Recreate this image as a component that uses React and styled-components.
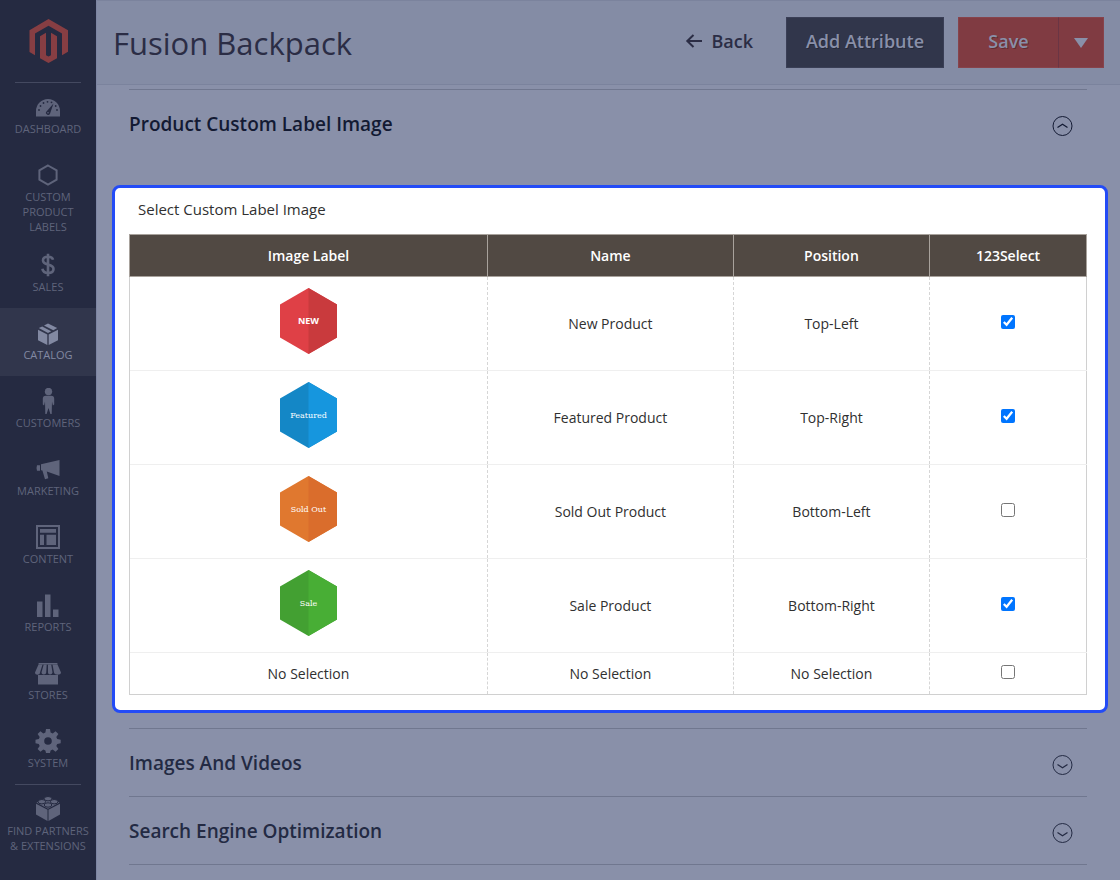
import React, { useState } from "react"
import styled, { createGlobalStyle } from "styled-components"

const GlobalStyle = createGlobalStyle`
  *, *::before, *::after {
    box-sizing: border-box;
  }
  body {
    margin: 0;
    background: #8990a9;
    color: #303030;
    font-family: "Open Sans", "Noto Sans", sans-serif;
    font-size: 14px;
  }
  button {
    font-family: inherit;
    cursor: pointer;
  }
`

const icons = {
  dashboard: (
    <>
      <path
        fillRule="evenodd"
        d="M1 22.500V17a12 12 0 0 1 24 0v5.500zM12 20.500a2 2 0 0 0 3-.8L18.500 9.500 11.500 17.500a2 2 0 0 0 .5 3z"
      />
      <g fill="#252a41">
        <circle cx="4" cy="16" r="0.9" />
        <circle cx="5.500" cy="12" r="0.9" />
        <circle cx="8.500" cy="9" r="0.9" />
        <circle cx="12.500" cy="7.800" r="0.9" />
        <circle cx="16.500" cy="8.300" r="0.9" />
        <circle cx="20.700" cy="12" r="0.9" />
        <circle cx="22" cy="16" r="0.9" />
      </g>
      <circle cx="13" cy="18.700" r="0.8" />
    </>
  ),
  labels: (
    <path
      d="M13 3.500 21.600 8.300V17.700L13 22.500 4.400 17.700V8.300z"
      fill="none"
      stroke="currentColor"
      strokeWidth="2"
    />
  ),
  sales: (
    <path
      d="M18 7.800C17.500 5.500 15.600 4.700 13 4.700c-2.800 0-5 1.300-5 3.700 0 5.400 10.500 2.800 10.500 8.500 0 2.700-2.300 4-5.400 4-3.100 0-5.300-1.400-5.700-4.200M13 1.800v22.400"
      fill="none"
      stroke="currentColor"
      strokeWidth="2.600"
    />
  ),
  catalog: (
    <>
      <path d="M3 9.700 12.300 14.400V25L3 20.300zM23 9.700 13.700 14.400V25L23 20.300z" />
      <path d="M3.800 8.100 7.200 6.400 16.200 11.200 13 12.900zM9 5.500 13 3.500 22.200 8.100 18.300 10.200z" />
    </>
  ),
  customers: (
    <>
      <circle cx="13.500" cy="3.500" r="3.700" />
      <path d="M10.800 7.800h5.400c2 0 3 1.200 3 3v5.800l-1.300.8-.9-4-.3 12.600h-1.300L13.500 20l-1.900 6h-1.300L10 13.400l-.9 4-1.300-.8v-5.800c0-1.800 1-3 3-3z" />
    </>
  ),
  marketing: (
    <path d="M2 9.200h3v5.500H2L1.500 12zM6 8.300 24.500 4v16L11.800 15.600l1.500 6.700-3.300.9-2.600-8.800L6 14.200z" />
  ),
  content: (
    <path
      fillRule="evenodd"
      d="M1 1h24v24H1zM3 3v20h20V3zM5 5h16v3.800H5zM5 10.700h4V21H5zM11.500 10.700H21V21h-9.500z"
    />
  ),
  reports: <path d="M2 9.500h5.500V25H2zM10 2.500h5.500V25H10zM18 17.500h5.500V25H18z" />,
  stores: (
    <>
      <path d="M3 15h20v9.500H3zM3.600 3h18.800v1.500H3.600z" />
      <path d="M3.500 4.500 0 12.500c0 3 5 3 5 0L7.500 4.500zM8.700 4.500 6.500 12.500c0 2.600 4.700 2.600 4.700 0L11.700 4.500zM13 4.500v8c0 2.600 4 2.600 4.500 0L16.200 4.500zM17.500 4.500 19 12.500c.5 3 7 3 7 0L22.500 4.500z" />
    </>
  ),
  system: (
    <path
      fillRule="evenodd"
      d="M11 1h4l.6 3.500 2.100.9 2.900-2.100 2.800 2.800-2.100 2.900.9 2.100 3.500.6v3.600l-3.500.6-.9 2.100 2.100 2.900-2.800 2.800-2.900-2.100-2.100.9L15 25h-4l-.6-2.500-2.100-.9-2.900 2.100-2.800-2.800 2.100-2.900-.9-2.100-3.300-.6v-3.600l3.300-.6.9-2.100-2.100-2.900 2.800-2.800 2.900 2.100 2.100-.9zM13 9.200a3.800 3.800 0 1 0 0 7.600 3.800 3.800 0 0 0 0-7.600z"
    />
  ),
  partners: (
    <>
      <path d="M1 7.700 12.500 13.800V25L1 18.500zM25 7.700 13.500 13.800V25L25 18.500z" />
      <path d="M1.500 6.500 13 1 24.500 6.500 13 12.700z" />
      <g stroke="#252a41" strokeWidth="1">
        <ellipse cx="13" cy="2.700" rx="3.800" ry="2.200" />
        <ellipse cx="6.800" cy="5.700" rx="3.800" ry="2.200" />
        <ellipse cx="19.200" cy="5.700" rx="3.800" ry="2.200" />
        <ellipse cx="13" cy="9" rx="3.800" ry="2.200" />
      </g>
    </>
  ),
}

const menu = [
  { icon: "dashboard", label: "Dashboard" },
  { icon: "labels", label: "Custom Product Labels" },
  { icon: "sales", label: "Sales" },
  { icon: "catalog", label: "Catalog", active: true },
  { icon: "customers", label: "Customers" },
  { icon: "marketing", label: "Marketing" },
  { icon: "content", label: "Content" },
  { icon: "reports", label: "Reports" },
  { icon: "stores", label: "Stores" },
  { icon: "system", label: "System" },
  { icon: "partners", label: "Find Partners & Extensions", divided: true },
]

const sans = "'Open Sans', sans-serif"
const slab = "'DejaVu Serif', serif"

const productLabels = [
  {
    name: "New Product",
    position: "Top-Left",
    checked: true,
    badge: { text: "NEW", left: "#df4046", right: "#c93a3d", font: sans, size: 9, weight: 700 },
  },
  {
    name: "Featured Product",
    position: "Top-Right",
    checked: true,
    badge: { text: "Featured", left: "#1487c6", right: "#1696de", font: slab, size: 8 },
  },
  {
    name: "Sold Out Product",
    position: "Bottom-Left",
    checked: false,
    badge: { text: "Sold Out", left: "#e0782f", right: "#da6d2c", font: slab, size: 8 },
  },
  {
    name: "Sale Product",
    position: "Bottom-Right",
    checked: true,
    badge: { text: "Sale", left: "#43a032", right: "#48ae35", font: slab, size: 8 },
  },
  { name: "No Selection", position: "No Selection", checked: false },
]

const Page = styled.div`
  display: flex;
  min-height: 100vh;
`

const Sidebar = styled.nav`
  flex: none;
  width: 96px;
  background: #252a41;
`

const Logo = styled.a`
  display: flex;
  justify-content: center;
  height: 82px;
  padding-top: 18px;
  color: #873e43;
`

const Menu = styled.ul`
  margin: 0;
  padding: 0;
  list-style: none;
`

const MenuItem = styled.li`
  &:first-child::before,
  &[data-divided="true"]::before {
    content: "";
    display: block;
    height: 1px;
    margin: 0 15px -1px;
    background: #444960;
  }
`

const MenuLink = styled.a`
  display: flex;
  flex-direction: column;
  align-items: center;
  min-height: 68px;
  padding: 12px 4px 6px;
  background: ${(props) => (props.$active ? "#31364c" : "transparent")};
  color: ${(props) => (props.$active ? "#8289a2" : "#5f647b")};
  font-size: 11px;
  line-height: 15px;
  text-align: center;
  text-decoration: none;
  text-transform: uppercase;

  svg {
    flex: none;
    margin-bottom: 1px;
    fill: currentColor;
  }
`

const Content = styled.main`
  flex: 1;
  min-width: 0;
  border-left: 1px solid #7d85a2;
`

const Header = styled.header`
  display: flex;
  align-items: center;
  height: 85px;
  padding: 0 16px;
  border-top: 1px solid #7b839d;
  border-bottom: 1px solid #7b839d;
  background: #848ca5;
`

const Title = styled.h1`
  flex: 1;
  margin: 0;
  color: #2b2d45;
  font-size: 31px;
  font-weight: 400;
  line-height: 44px;
`

const BackButton = styled.button`
  display: flex;
  align-items: center;
  gap: 8px;
  margin-right: 33px;
  padding: 0 0 3px;
  border: 0;
  background: none;
  color: #2b2d45;
  font-size: 18px;
  font-weight: 600;
  line-height: 24px;
`

const ActionButton = styled.button`
  width: ${(props) => props.$width}px;
  height: 51px;
  padding: 0 0 3px;
  border: 1px solid ${(props) => (props.$primary ? "#87434b" : "#3a3f56")};
  background: ${(props) => (props.$primary ? "#803b42" : "#31364b")};
  color: #8990a9;
  font-size: 18px;
  font-weight: 600;
  line-height: 24px;
  text-shadow: 1px 1px 0 rgba(0, 0, 0, 0.25);
`

const SplitButton = styled.div`
  display: flex;
  margin-left: 14px;

  ${ActionButton}:first-child {
    border-right-color: #6a3544;
  }
  ${ActionButton}:last-child {
    border-left: 0;
  }
`

const Sections = styled.div`
  margin: 4px 33px 0 32px;
  border-bottom: 1px solid #70778f;
`

const SectionToggle = styled.button`
  display: flex;
  align-items: center;
  justify-content: space-between;
  width: 100%;
  height: 68px;
  padding: 0 14px 0 0;
  border: 0;
  border-top: 1px solid #70778f;
  background: none;
  color: ${(props) => (props.$open ? "#131a33" : "#232a43")};
  font-size: 19px;
  font-weight: 600;
  line-height: 24px;
  text-align: left;

  svg {
    margin-top: 4px;
  }
`

const Highlight = styled.section`
  margin: 28px -21px 15px -17px;
  padding: 0 18px 15px 14px;
  border: 3px solid #234bf6;
  border-radius: 8px;
  background: #fff;
`

const LabelTable = styled.table`
  width: 100%;
  border-collapse: collapse;
  table-layout: fixed;
  text-align: center;

  caption {
    padding: 11px 9px 15px;
    font-size: 15px;
    line-height: 20px;
    text-align: left;
  }
  thead th {
    height: 42px;
    padding: 0;
    border: 1px solid #a8a29c;
    background: #514943;
    color: #fff;
    font-size: 14px;
    font-weight: 600;
  }
  tbody {
    border: 1px solid #d0d0d0;
  }
  td {
    padding: 0;
    border-top: 1px solid #efefef;
    border-left: 1px dashed #d6d6d6;
    line-height: 20px;
  }
  td:first-child {
    border-left: 1px solid #d0d0d0;
  }
`

const LabelRow = styled.tr`
  td {
    height: ${(props) => (props.$tall ? "94px" : "42px")};
  }
  svg {
    display: block;
    margin: 0 auto 5px;
  }
`

const Checkbox = styled.input`
  display: block;
  width: 14px;
  height: 14px;
  margin: 0 auto 4px;
`

const MagentoLogo = () => (
  <svg width="40" height="46" viewBox="0 0 40 46" fill="currentColor">
    <path d="M20.500 1 40 12.200v21.600l-6 3.400V15.600L20.500 7.800 7 15.600v21.600l-5.500-3.200V12.200z" />
    <path d="M12 18.200l6-3.400v22.400l2.500 1.400 2.500-1.400V14.800l6 3.400v22.100L20.500 45 12 40.300z" />
  </svg>
)

const ToggleIcon = ({ open }) => (
  <svg width="21" height="22" viewBox="0 0 21 22" fill="none" stroke="currentColor">
    <circle cx="10.500" cy="11" r="9.500" />
    <path d={open ? "M5.500 12.500 10.500 9.300l5 3.200" : "M5.500 10.500 10.500 13.700l5-3.200"} strokeWidth="1.300" />
  </svg>
)

const Badge = ({ text, left, right, font, size, weight }) => (
  <svg width="57" height="66" viewBox="0 0 57 66" role="img" aria-label={text}>
    <path d="M28.500 0 57 16.500v33L28.500 66 0 49.500v-33z" fill={left} />
    <path d="M28.500 0V66L57 49.500V16.500z" fill={right} />
    <text
      x="28.500"
      y="36"
      fill="#fff"
      fontFamily={font}
      fontSize={size}
      fontWeight={weight}
      textAnchor="middle"
    >
      {text}
    </text>
  </svg>
)

const Section = ({ title, open, children }) => (
  <>
    <SectionToggle type="button" $open={open} aria-expanded={!!open}>
      {title}
      <ToggleIcon open={open} />
    </SectionToggle>
    {children}
  </>
)

const LabelPicker = () => {
  const [selected, setSelected] = useState(productLabels.map((label) => label.checked))

  const toggle = (index) => {
    setSelected(selected.map((value, i) => (i === index ? !value : value)))
  }

  return (
    <Highlight>
      <LabelTable>
        <caption>Select Custom Label Image</caption>
        <colgroup>
          <col style={{ width: "37.4%" }} />
          <col style={{ width: "25.7%" }} />
          <col style={{ width: "20.5%" }} />
          <col style={{ width: "16.4%" }} />
        </colgroup>
        <thead>
          <tr>
            <th scope="col">Image Label</th>
            <th scope="col">Name</th>
            <th scope="col">Position</th>
            <th scope="col">123Select</th>
          </tr>
        </thead>
        <tbody>
          {productLabels.map(({ name, position, badge }, index) => (
            <LabelRow key={name} $tall={!!badge}>
              <td>{badge ? <Badge {...badge} /> : name}</td>
              <td>{name}</td>
              <td>{position}</td>
              <td>
                <Checkbox
                  type="checkbox"
                  aria-label={name}
                  checked={selected[index]}
                  onChange={() => toggle(index)}
                />
              </td>
            </LabelRow>
          ))}
        </tbody>
      </LabelTable>
    </Highlight>
  )
}

const App = () => (
  <Page>
    <GlobalStyle />
    <Sidebar>
      <Logo href="#" aria-label="Magento">
        <MagentoLogo />
      </Logo>
      <Menu>
        {menu.map(({ icon, label, active, divided }) => (
          <MenuItem key={label} data-divided={!!divided}>
            <MenuLink href="#" $active={active}>
              <svg width="26" height="26" viewBox="0 0 26 26">
                {icons[icon]}
              </svg>
              {label}
            </MenuLink>
          </MenuItem>
        ))}
      </Menu>
    </Sidebar>
    <Content>
      <Header>
        <Title>Fusion Backpack</Title>
        <BackButton type="button">
          <svg width="18" height="16" viewBox="0 0 18 16" fill="none" stroke="currentColor" strokeWidth="2">
            <path d="M17 8H2.500M8.500 2 2.300 8l6.200 6" />
          </svg>
          Back
        </BackButton>
        <ActionButton type="button" $width={158}>
          Add Attribute
        </ActionButton>
        <SplitButton>
          <ActionButton type="button" $primary $width={101}>
            Save
          </ActionButton>
          <ActionButton type="button" $primary $width={45} aria-label="More save options">
            <svg width="14" height="10" viewBox="0 0 14 10" fill="currentColor">
              <path d="M0 0h14L7 10z" />
            </svg>
          </ActionButton>
        </SplitButton>
      </Header>
      <Sections>
        <Section title="Product Custom Label Image" open>
          <LabelPicker />
        </Section>
        <Section title="Images And Videos" />
        <Section title="Search Engine Optimization" />
      </Sections>
    </Content>
  </Page>
)

export default App
